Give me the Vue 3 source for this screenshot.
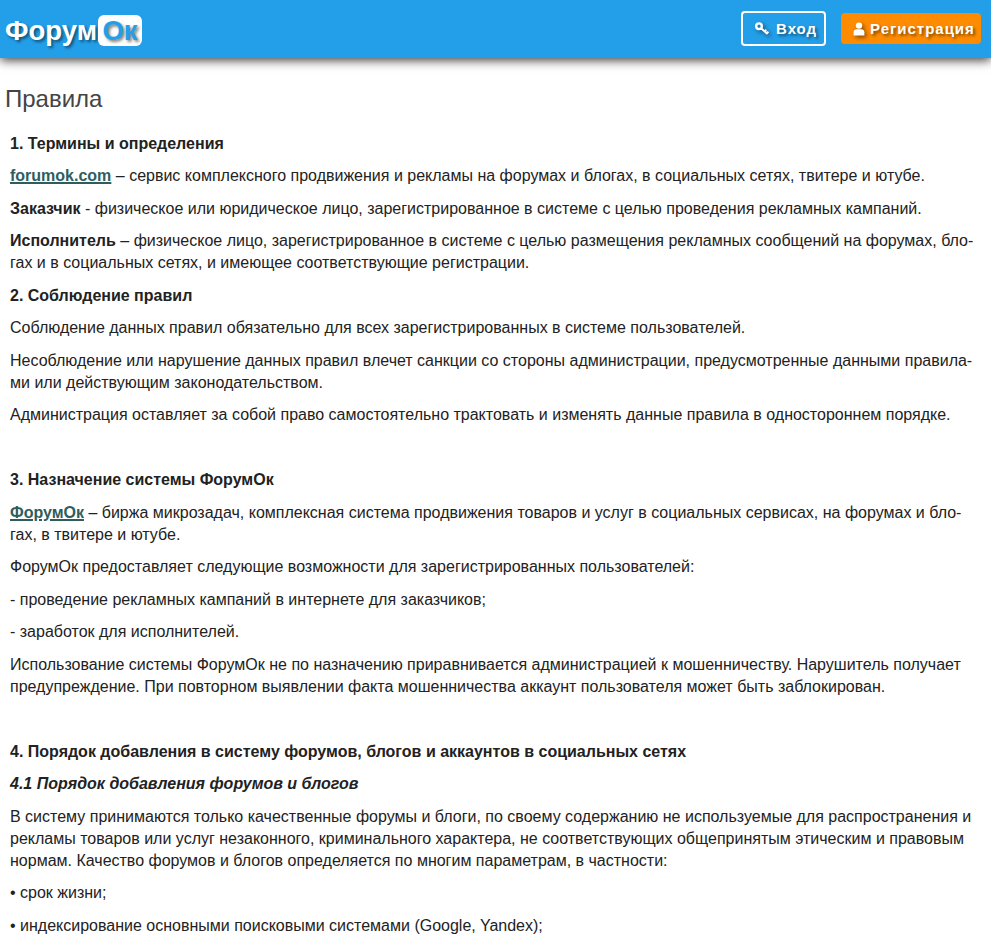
<script setup>
</script>

<template>
  <div class="page">
    <header class="top">
      <div class="logo"><span class="logo-a">Форум</span><span class="logo-b">Ок</span></div>
      <nav class="actions">
        <a class="btn login">
          <svg class="ico key" viewBox="0 0 14 14" width="14" height="14">
            <circle cx="4" cy="4.2" r="2.8" fill="none" stroke="#fff" stroke-width="2.4"/>
            <path d="M6 6.2 12.6 12M9.6 9.4 11.2 7.8M11.8 11.3 13.4 9.7" fill="none" stroke="#fff" stroke-width="2"/>
          </svg>
          <span>Вход</span>
        </a>
        <a class="btn reg">
          <svg class="ico user" viewBox="0 0 12 14" width="12" height="14">
            <circle cx="6" cy="3.6" r="3.2" fill="#fff"/>
            <path d="M0.6 13.4V10.2C0.6 8.2 2.2 7.2 3.6 7.2H8.4C9.8 7.2 11.4 8.2 11.4 10.2V13.4Z" fill="#fff"/>
          </svg>
          <span>Регистрация</span>
        </a>
      </nav>
    </header>
    <main class="content">
      <h1>Правила</h1>
      <div class="body">
        <p><b>1. Термины и определения</b></p>
        <p><a class="link">forumok.com</a> – сервис комплексного продвижения и рекламы на форумах и блогах, в социальных сетях, твитере и ютубе.</p>
        <p><b>Заказчик</b> - физическое или юридическое лицо, зарегистрированное в системе с целью проведения рекламных кампаний.</p>
        <p><b>Исполнитель</b> – физическое лицо, зарегистрированное в системе с целью размещения рекламных сообщений на форумах, бло&shy;гах и в социальных сетях, и имеющее соответствующие регистрации.</p>
        <p><b>2. Соблюдение правил</b></p>
        <p>Соблюдение данных правил обязательно для всех зарегистрированных в системе пользователей.</p>
        <p>Несоблюдение или нарушение данных правил влечет санкции со стороны администрации, предусмотренные данными правила&shy;ми или действующим законодательством.</p>
        <p>Администрация оставляет за собой право самостоятельно трактовать и изменять данные правила в одностороннем порядке.</p>
        <p>&nbsp;</p>
        <p><b>3. Назначение системы ФорумОк</b></p>
        <p><a class="link">ФорумОк</a> – биржа микрозадач, комплексная система продвижения товаров и услуг в социальных сервисах, на форумах и бло&shy;гах, в твитере и ютубе.</p>
        <p>ФорумОк предоставляет следующие возможности для зарегистрированных пользователей:</p>
        <p>- проведение рекламных кампаний в интернете для заказчиков;</p>
        <p>- заработок для исполнителей.</p>
        <p>Использование системы ФорумОк не по назначению приравнивается администрацией к мошенничеству. Нарушитель получает предупреждение. При повторном выявлении факта мошенничества аккаунт пользователя может быть заблокирован.</p>
        <p>&nbsp;</p>
        <p><b>4. Порядок добавления в систему форумов, блогов и аккаунтов в социальных сетях</b></p>
        <p><b><i>4.1 Порядок добавления форумов и блогов</i></b></p>
        <p>В систему принимаются только качественные форумы и блоги, по своему содержанию не используемые для распространения и рекламы товаров или услуг незаконного, криминального характера, не соответствующих общепринятым этическим и правовым нормам. Качество форумов и блогов определяется по многим параметрам, в частности:</p>
        <p>• срок жизни;</p>
        <p>• индексирование основными поисковыми системами (Google, Yandex);</p>
      </div>
    </main>
  </div>
</template>

<style>
html, body { margin: 0; background: #fff; overflow: hidden; }
</style>

<style scoped>
.page {
  font-family: "Liberation Sans", Arial, sans-serif;
  color: #222;
  height: 938px;
  overflow: hidden;
}
.top {
  box-sizing: border-box;
  height: 58px;
  background: #239fe9;
  box-shadow: 0 2px 10px rgba(0, 0, 0, 0.8);
  display: flex;
  justify-content: space-between;
  align-items: center;
  padding: 0 10px 1px 5px;
  position: relative;
}
.logo {
  display: flex;
  align-items: center;
  margin-top: 4px;
  font-weight: 700;
  font-size: 27.5px;
  line-height: 31px;
}
.logo-a {
  color: #fff;
  text-shadow: 2px 2px 3px rgba(0, 0, 0, 0.5);
}
.logo-b {
  color: #239fe9;
  background: #fff;
  border-radius: 6px;
  width: 44px;
  margin-left: 1px;
  text-align: center;
  text-shadow: 2px 2px 3px rgba(0, 0, 0, 0.5);
}
.actions {
  display: flex;
  align-items: center;
  gap: 15px;
}
.btn {
  display: flex;
  align-items: center;
  box-sizing: border-box;
  border-radius: 4px;
  color: #fff;
  font-weight: 700;
  font-size: 15px;
  letter-spacing: 1px;
  text-shadow: 2px 2px 3px rgba(0, 0, 0, 0.5);
}
.ico {
  filter: drop-shadow(2px 2px 2px rgba(0, 0, 0, 0.5));
  flex: none;
}
.login {
  width: 85px;
  height: 35px;
  border: 2px solid #fff;
  padding-left: 12px;
  gap: 7px;
}
.reg {
  width: 140px;
  height: 31px;
  background: #ff8c00;
  padding-left: 12px;
  gap: 5px;
}
.content {
  padding: 0 5px;
}
h1 {
  margin: 26px 0 18.75px;
  font-weight: 400;
  font-size: 24px;
  line-height: 30px;
  color: #444;
}
.body {
  padding: 0 5px;
  font-size: 16px;
  line-height: 22px;
}
.body p {
  margin: 0 0 10.5px;
}
.link {
  font-weight: 700;
  color: #2f5d5d;
  text-decoration: underline;
  text-decoration-thickness: 2px;
}
</style>
